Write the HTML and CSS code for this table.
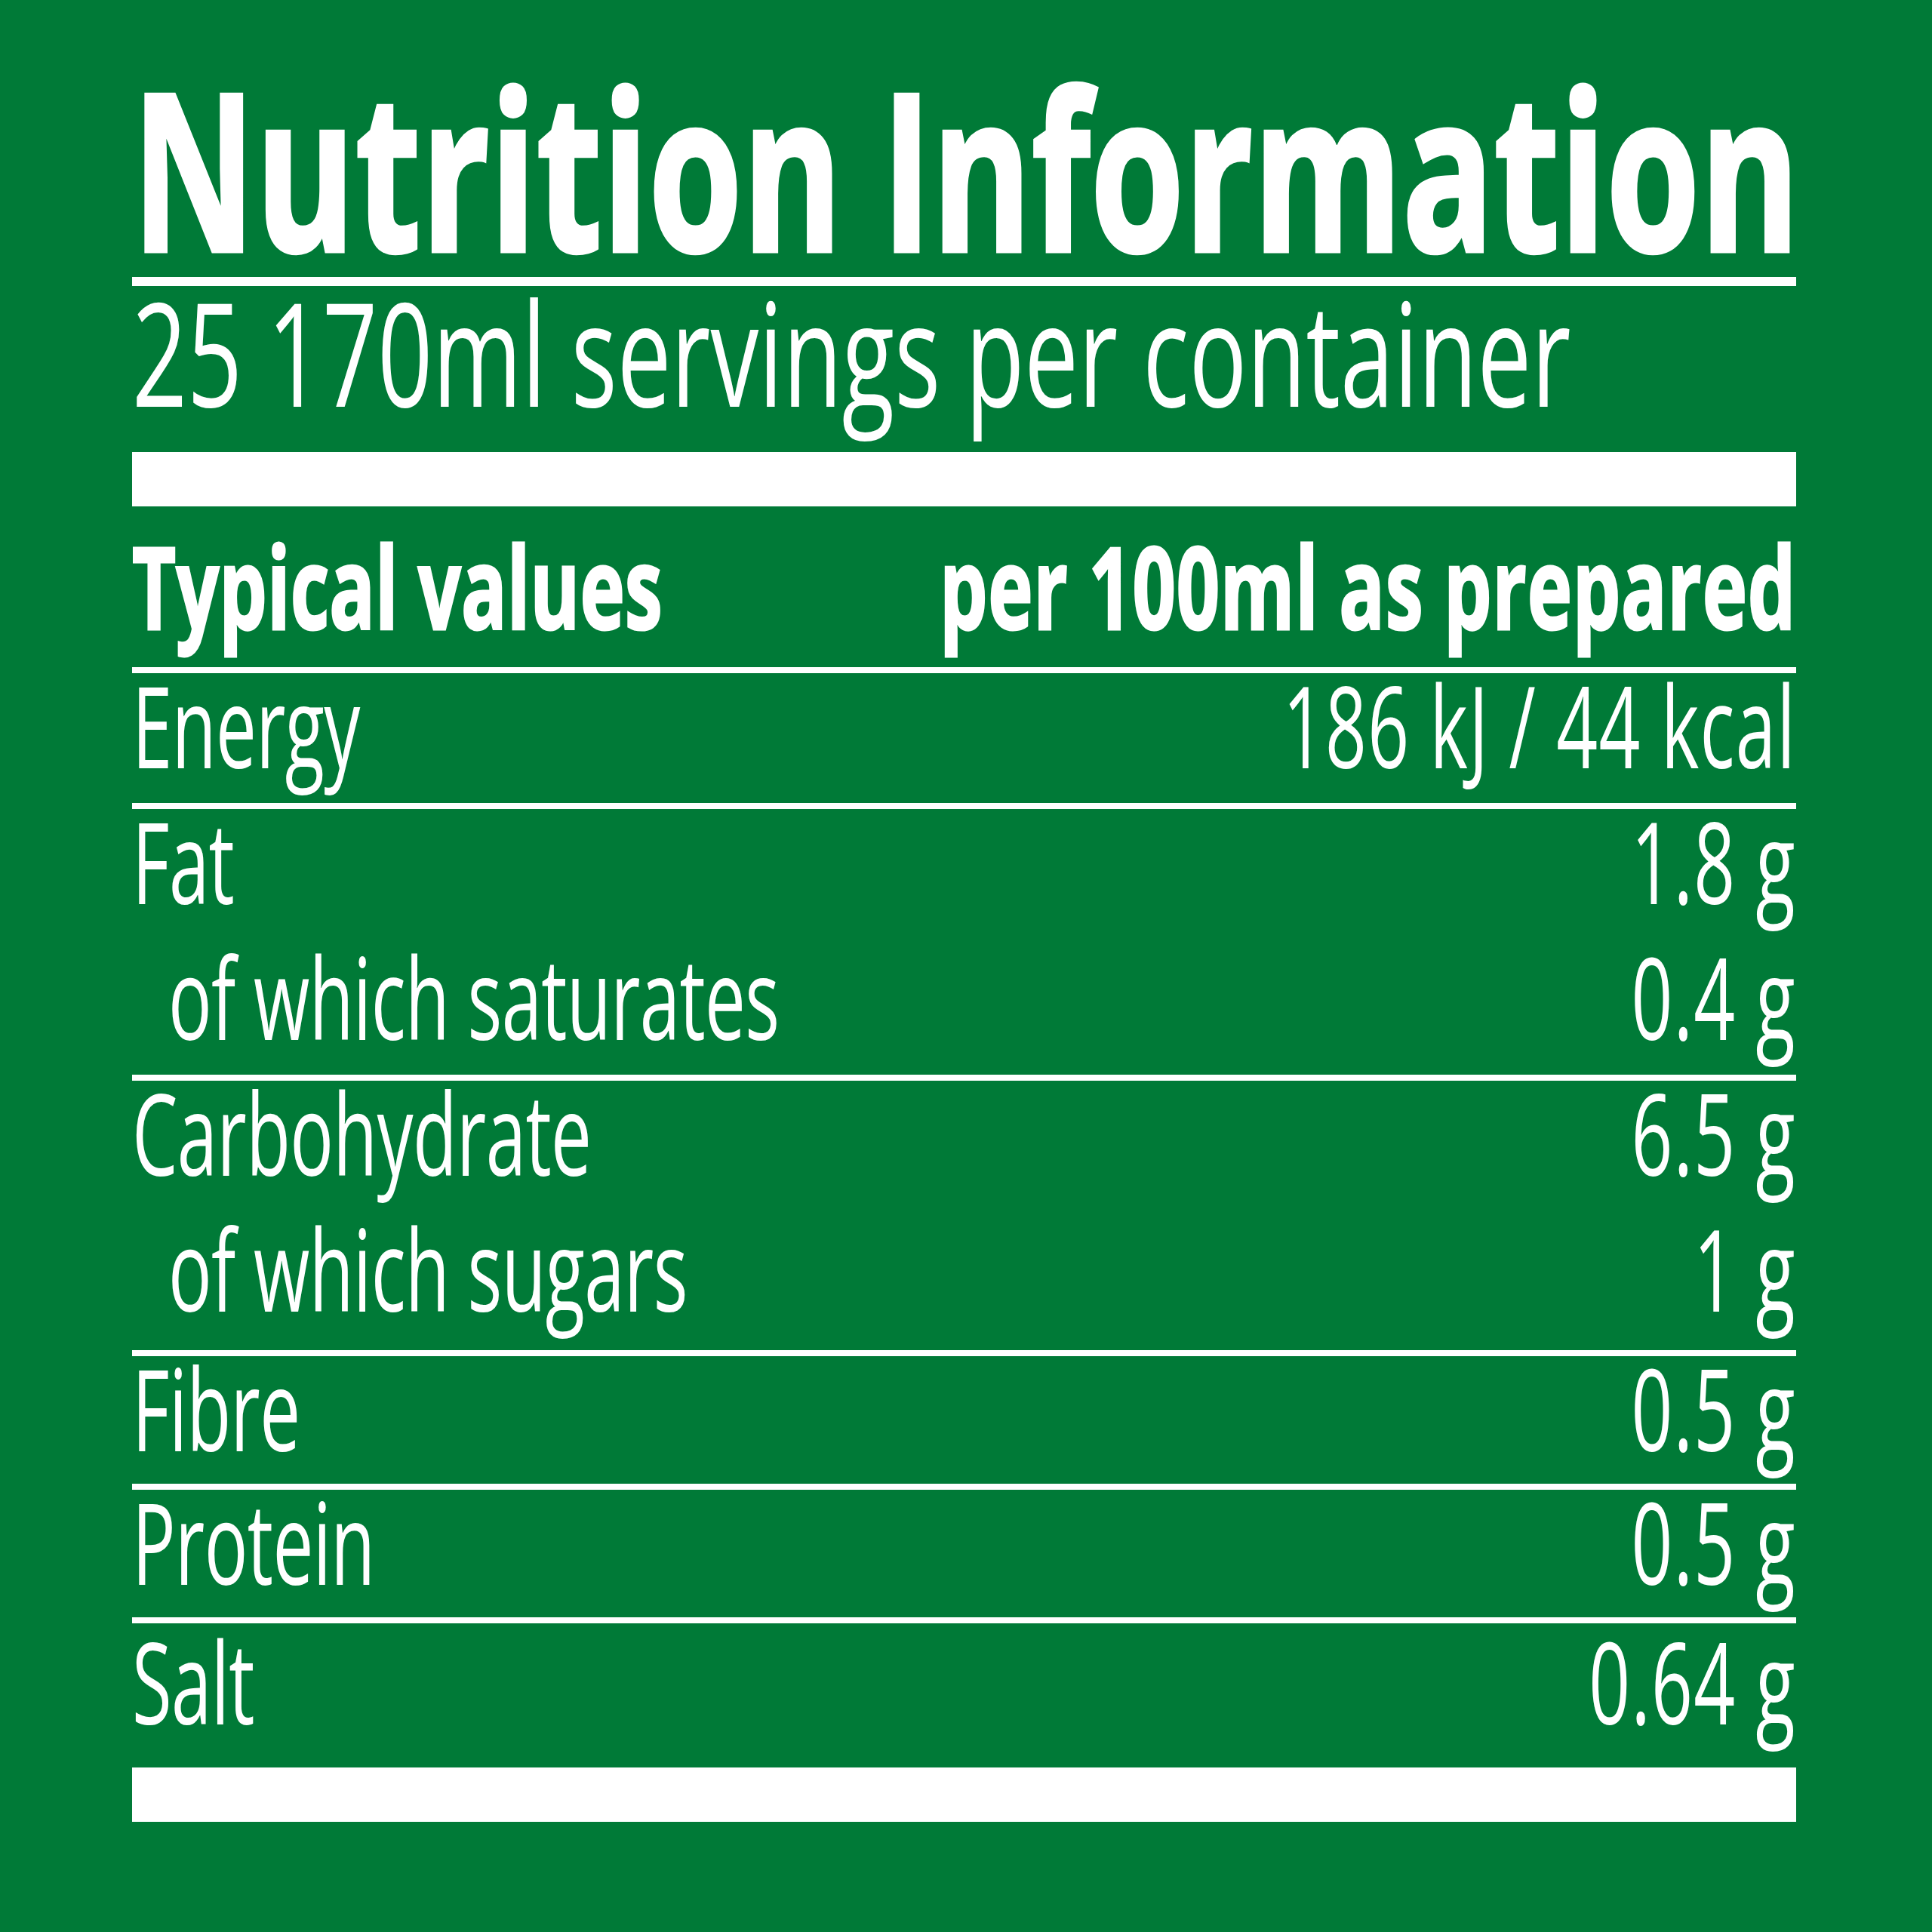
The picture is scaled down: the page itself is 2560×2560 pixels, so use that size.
FILE: index.html
```html
<!DOCTYPE html><html lang="en"><head>
    <meta charset="UTF-8">
    <meta name="viewport" content="width=device-width, initial-scale=1.0">
    <title>Nutrition Information</title>
    <link rel="stylesheet" href="styles.css">
</head>
<body>

<div class="label">
    <h1 class="title"><span>Nutrition Information</span></h1>
    <div class="rule-thin"></div>
    <p class="servings"><span>25 170ml servings per container</span></p>
    <div class="rule-thick"></div>

    <div class="row head">
        <div class="cells"><span>Typical values</span><span>per 100ml as prepared</span></div>
    </div>
    <div class="row">
        <div class="cells"><span>Energy</span><span>186 kJ / 44 kcal</span></div>
    </div>
    <div class="row">
        <div class="cells"><span>Fat</span><span>1.8 g</span></div>
        <div class="cells sub"><span>of which saturates</span><span>0.4 g</span></div>
    </div>
    <div class="row carbs">
        <div class="cells"><span>Carbohydrate</span><span>6.5 g</span></div>
        <div class="cells sub"><span>of which sugars</span><span>1 g</span></div>
    </div>
    <div class="row short">
        <div class="cells"><span>Fibre</span><span>0.5 g</span></div>
    </div>
    <div class="row short">
        <div class="cells"><span>Protein</span><span>0.5 g</span></div>
    </div>
    <div class="row last">
        <div class="cells"><span>Salt</span><span>0.64 g</span></div>
    </div>

    <div class="rule-thick"></div>
</div>

</body></html>
```

FILE: styles.css
```css
html, body {
    margin: 0;
    background-color: #007a37;
}

body {
    font-family: "Open Sans", "Liberation Sans", sans-serif;
    color: #ffffff;
    min-height: 2560px;
    overflow: hidden;
}

.label {
    width: 2205px;
    margin-left: 175px;
    padding-top: 75px;
}

/* the print face is a condensed one, so the text is squeezed sideways */
.title {
    margin: 0;
    height: 291px;
    font-size: 291px;
    font-weight: 700;
    line-height: 291px;
    white-space: nowrap;
    -webkit-text-stroke: 5px #ffffff;
}

.title span {
    display: block;
    width: calc(100% / 0.691);
    transform: scaleX(0.691);
    transform-origin: 0 0;
}

.rule-thin {
    height: 12px;
    margin-top: 1px;
    background-color: #ffffff;
}

.servings {
    margin: 7px 0 53px;
    font-size: 190px;
    line-height: 160px;
    white-space: nowrap;
}

.servings span {
    display: block;
    width: calc(100% / 0.672);
    transform: scaleX(0.672);
    transform-origin: 0 0;
}

.rule-thick {
    height: 72px;
    background-color: #ffffff;
}

.row {
    border-top: 8px solid #ffffff;
    padding-bottom: 36px;
    font-size: 150px;
    line-height: 136px;
}

.row.head {
    border-top: none;
    padding: 37px 0 40px;
    font-weight: 700;
    -webkit-text-stroke: 3px #ffffff;
}

.row.carbs {
    padding-bottom: 41px;
}

.row.short {
    padding-bottom: 33px;
}

.row.last {
    padding: 8px 0 47px;
}

.cells {
    box-sizing: border-box;
    display: flex;
    justify-content: space-between;
    width: calc(100% / 0.64);
    transform: scaleX(0.64);
    transform-origin: 0 0;
    white-space: nowrap;
}

.cells span:first-child {
    letter-spacing: -1px;
}

.cells span:last-child {
    letter-spacing: 2px;
}

.head .cells {
    width: calc(100% / 0.67);
    transform: scaleX(0.67);
}

.head .cells span:first-child {
    letter-spacing: 0;
}

.head .cells span:last-child {
    letter-spacing: 1px;
}

.cells.sub {
    margin-top: 44px;
    padding-left: 75px;
}
```
